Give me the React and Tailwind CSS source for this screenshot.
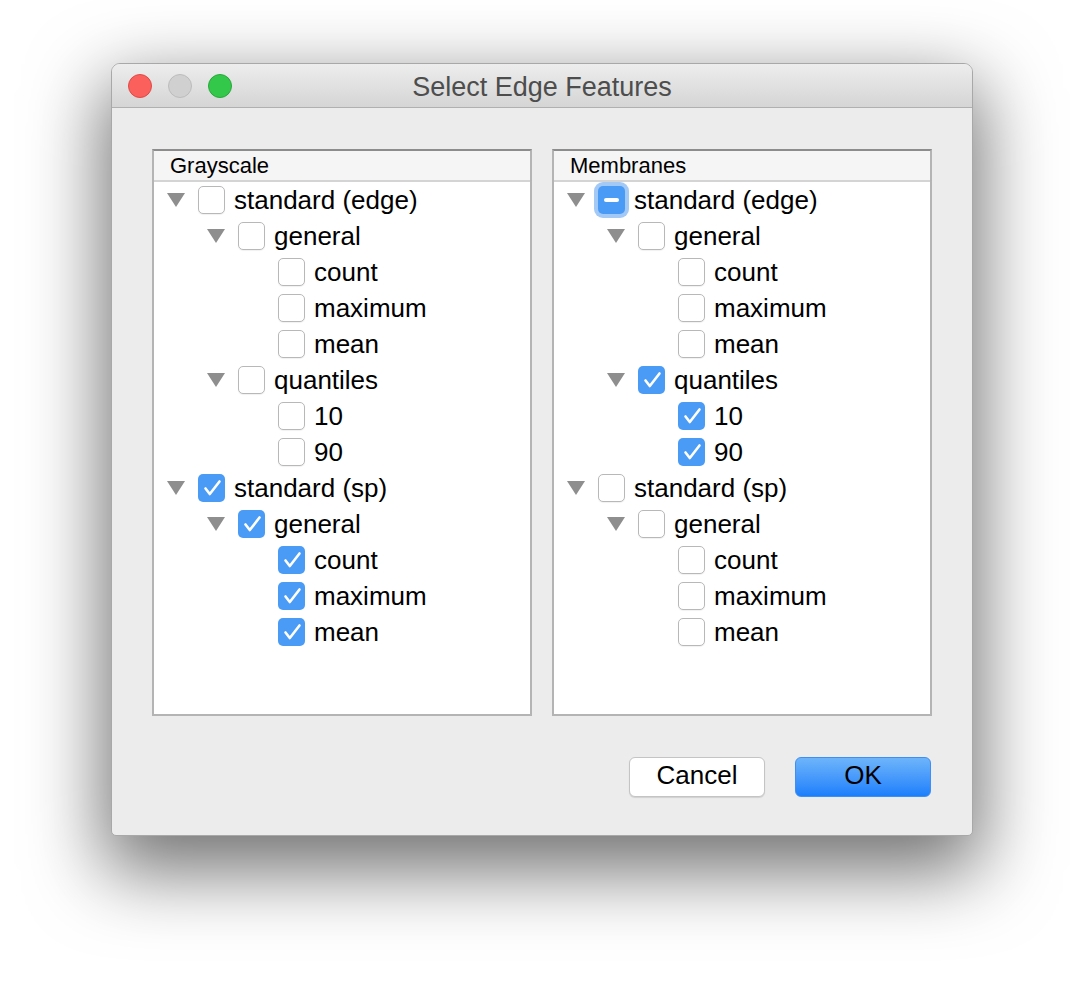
import React from 'react';

const FONT = { fontFamily: '"Liberation Sans", Arial, Helvetica, sans-serif' };

const grayscale = [
  { label: 'standard (edge)', level: 0, parent: true, state: 'off' },
  { label: 'general', level: 1, parent: true, state: 'off' },
  { label: 'count', level: 2, state: 'off' },
  { label: 'maximum', level: 2, state: 'off' },
  { label: 'mean', level: 2, state: 'off' },
  { label: 'quantiles', level: 1, parent: true, state: 'off' },
  { label: '10', level: 2, state: 'off' },
  { label: '90', level: 2, state: 'off' },
  { label: 'standard (sp)', level: 0, parent: true, state: 'on' },
  { label: 'general', level: 1, parent: true, state: 'on' },
  { label: 'count', level: 2, state: 'on' },
  { label: 'maximum', level: 2, state: 'on' },
  { label: 'mean', level: 2, state: 'on' },
];

const membranes = [
  { label: 'standard (edge)', level: 0, parent: true, state: 'mixed', focus: true },
  { label: 'general', level: 1, parent: true, state: 'off' },
  { label: 'count', level: 2, state: 'off' },
  { label: 'maximum', level: 2, state: 'off' },
  { label: 'mean', level: 2, state: 'off' },
  { label: 'quantiles', level: 1, parent: true, state: 'on' },
  { label: '10', level: 2, state: 'on' },
  { label: '90', level: 2, state: 'on' },
  { label: 'standard (sp)', level: 0, parent: true, state: 'off' },
  { label: 'general', level: 1, parent: true, state: 'off' },
  { label: 'count', level: 2, state: 'off' },
  { label: 'maximum', level: 2, state: 'off' },
  { label: 'mean', level: 2, state: 'off' },
];

function Disclosure({ show }) {
  return (
    <div className="w-[18px] h-[14px] shrink-0">
      {show && (
        <svg width="18" height="14" viewBox="0 0 18 14">
          <path d="M0 0 H18 L9 14 Z" fill="#8e8e8e" />
        </svg>
      )}
    </div>
  );
}

function Check({ state, focus }) {
  if (state === 'off') {
    return (
      <div className="w-[27px] h-[28px] shrink-0 rounded-[5px] border border-[#b8b8b8] bg-white shadow-[0_1px_1px_rgba(0,0,0,0.06)]" />
    );
  }
  return (
    <div
      className={`w-[27px] h-[28px] shrink-0 rounded-[5px] bg-[#4a9bf6] flex items-center justify-center ${
        focus ? 'shadow-[0_0_0_4px_#a3c9f6]' : ''
      }`}
    >
      {state === 'on' ? (
        <svg width="27" height="28" viewBox="0 0 27 28">
          <path d="M7.5 14.5 L11.8 20 L21.5 7.5" fill="none" stroke="white" strokeWidth="2.6" strokeLinecap="round" strokeLinejoin="round" />
        </svg>
      ) : (
        <div className="w-[15px] h-[4px] rounded-full bg-white" />
      )}
    </div>
  );
}

function Panel({ title, rows }) {
  return (
    <div className="w-[380px] h-[567px] bg-white border-2 border-[#b4b4b4] border-t-[#8c8c8c] flex flex-col">
      <div className="h-[31px] bg-[#f5f5f5] border-b-2 border-[#d4d4d4] flex items-center pl-[16px] text-[22px] text-black">
        {title}
      </div>
      <div className="flex flex-col">
        {rows.map((r, i) => (
          <div
            key={i}
            className={`h-[36px] flex items-center ${
              r.level === 0 ? 'pl-[13px]' : r.level === 1 ? 'pl-[53px]' : 'pl-[93px]'
            }`}
          >
            <Disclosure show={r.parent} />
            <div className="ml-[13px]">
              <Check state={r.state} focus={r.focus} />
            </div>
            <span className="ml-[9px] text-[26px] leading-none text-black">{r.label}</span>
          </div>
        ))}
      </div>
    </div>
  );
}

export default function App() {
  return (
    <div className="w-[1084px] h-[996px] bg-white overflow-hidden" style={FONT}>
      <div className="ml-[111px] mt-[63px] w-[862px] h-[773px] rounded-t-[9px] rounded-b-[5px] border border-[#a8a8a8] bg-[#ececec] shadow-[0_28px_75px_8px_rgba(0,0,0,0.55)] flex flex-col overflow-hidden">
        <div className="relative h-[44px] shrink-0 bg-gradient-to-b from-[#ededed] to-[#d5d5d5] border-b border-[#b0b0b0] flex items-center pl-[16px] gap-[16px]">
          <div className="w-[24px] h-[24px] rounded-full bg-[#fc605c] border border-[#de4a45]" />
          <div className="w-[24px] h-[24px] rounded-full bg-[#d0d0d0] border border-[#bcbcbc]" />
          <div className="w-[24px] h-[24px] rounded-full bg-[#34c84a] border border-[#27a83b]" />
          <div className="absolute inset-0 pt-[4px] flex items-center justify-center text-[27px] text-[#4d4d4d] pointer-events-none">
            Select Edge Features
          </div>
        </div>
        <div className="flex gap-[20px] pl-[40px] pt-[41px]">
          <Panel title="Grayscale" rows={grayscale} />
          <Panel title="Membranes" rows={membranes} />
        </div>
        <div className="flex justify-end gap-[30px] pr-[41px] pt-[41px]">
          <button className="w-[136px] h-[40px] pb-[5px] rounded-[6px] bg-white border border-[#c4c4c4] shadow-[0_1px_1px_rgba(0,0,0,0.12)] text-[26px] text-black leading-none">
            Cancel
          </button>
          <button className="w-[136px] h-[40px] pb-[5px] rounded-[6px] bg-gradient-to-b from-[#6db4fa] to-[#1a7ffb] border border-[#3d8ef5] text-[26px] text-black leading-none">
            OK
          </button>
        </div>
      </div>
    </div>
  );
}
